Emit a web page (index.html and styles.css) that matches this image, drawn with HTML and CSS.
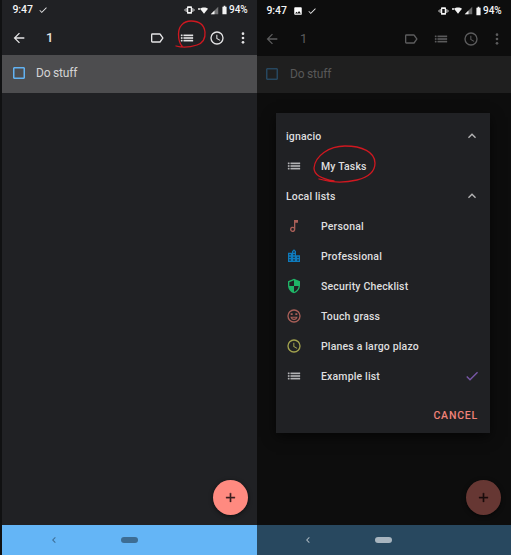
FILE: index.html
```html
<!DOCTYPE html>
<html lang="en">
<head>
<meta charset="utf-8">
<title>Tasks</title>
<link rel="stylesheet" href="styles.css">
</head>
<body>
<svg class="defs" aria-hidden="true">
  <symbol id="back" viewBox="0 0 24 24"><path d="M20 11H7.8l5.6-5.6L12 4l-8 8 8 8 1.4-1.4L7.8 13H20z"/></symbol>
  <symbol id="label" viewBox="0 0 24 24"><path d="M17.6 5.8C17.3 5.3 16.7 5 16 5H5a2 2 0 0 0-2 2v10c0 1.1.9 2 2 2h11c.7 0 1.3-.3 1.6-.8L22 12zM16 17H5V7h11l3.6 5z"/></symbol>
  <symbol id="list" viewBox="0 0 24 24"><path d="M3 9h2V7H3zm0 4h2v-2H3zm0 4h2v-2H3zM7 9h14V7H7zm0 4h14v-2H7zm0 4h14v-2H7z" stroke="currentColor" stroke-width=".5"/></symbol>
  <symbol id="clock" viewBox="0 0 24 24"><path d="M12 2a10 10 0 1 0 0 20 10 10 0 0 0 0-20zm0 18a8 8 0 1 1 0-16 8 8 0 0 1 0 16zm.5-13H11v6l5.2 3.2.8-1.3-4.5-2.7z"/></symbol>
  <symbol id="more" viewBox="0 0 24 24"><circle cx="12" cy="5.500" r="2"/><circle cx="12" cy="12" r="2"/><circle cx="12" cy="18.500" r="2"/></symbol>
  <symbol id="check" viewBox="0 0 24 24"><path d="M9 16.2 4.8 12l-1.4 1.4L9 19 21 7l-1.4-1.4z"/></symbol>
  <symbol id="image" viewBox="0 0 24 24"><path d="M21 19V5a2 2 0 0 0-2-2H5a2 2 0 0 0-2 2v14c0 1.1.9 2 2 2h14a2 2 0 0 0 2-2zM8.500 13.500l2.500 3L14.500 12l4.500 6H5z"/></symbol>
  <symbol id="vibrate" viewBox="0 0 24 24"><path fill-rule="evenodd" d="M8 3h8a2 2 0 0 1 2 2v14a2 2 0 0 1-2 2H8a2 2 0 0 1-2-2V5a2 2 0 0 1 2-2zm1 4v10h6V7zM3 7h2v10H3zm16 0h2v10h-2zM0 10h2v4H0zm22 0h2v4h-2z"/></symbol>
  <symbol id="wifi" viewBox="0 0 24 24"><path d="M12 21.500 24 7C18 1.500 6 1.500 0 7z"/></symbol>
  <symbol id="signal" viewBox="0 0 24 24"><path opacity=".4" d="M2 22h20V2z"/><path d="M2 22h10V12z"/></symbol>
  <symbol id="battery" viewBox="0 0 12 24"><path d="M4 2h4v2h3v18H1V4h3z"/></symbol>
  <symbol id="note" viewBox="0 0 24 24"><path fill-rule="evenodd" d="M12 3v10.600A4 4 0 1 0 14 17V7h4V3zM10 19a2 2 0 1 1 0-4 2 2 0 0 1 0 4z"/></symbol>
  <symbol id="city" viewBox="0 0 24 24"><path d="M15 11V5l-3-3-3 3v2H3v14h18V11zm-8 8H5v-2h2zm0-4H5v-2h2zm0-4H5V9h2zm6 8h-2v-2h2zm0-4h-2v-2h2zm0-4h-2V9h2zm0-4h-2V5h2zm6 12h-2v-2h2zm0-4h-2v-2h2z"/></symbol>
  <symbol id="shield" viewBox="0 0 24 24"><path d="M12 1 3 5v6c0 5.550 3.840 10.740 9 12 5.160-1.260 9-6.450 9-12V5zm0 11h7c-.5 4.100-3.300 7.800-7 8.900V12H5V6.300l7-3.100z"/></symbol>
  <symbol id="face" viewBox="0 0 24 24"><circle cx="12" cy="12" r="9" fill="none" stroke="currentColor" stroke-width="2"/><path d="M7 8h3v2.500H7zm7 0h3v2.500h-3zM6.500 13h11c-.6 3-2.800 5-5.500 5s-4.900-2-5.500-5zm2.500 1.700c.7 1 1.700 1.600 3 1.600s2.300-.6 3-1.600z"/></symbol>
  <symbol id="up" viewBox="0 0 24 24"><path d="m12 8-6 6 1.400 1.400 4.600-4.600 4.600 4.600L18 14z"/></symbol>
  <symbol id="plus" viewBox="0 0 24 24"><path d="M19 13h-6v6h-2v-6H5v-2h6V5h2v6h6z"/></symbol>
  <symbol id="prev" viewBox="0 0 24 24"><path d="M15.400 7.400 14 6l-6 6 6 6 1.400-1.400-4.600-4.600z"/></symbol>
</svg>
<main class="screens">
  <section class="phone">
    <header class="status">
      <span class="time">9:47</span>
      <svg class="tick"><use href="#check"/></svg>
      <div class="system">
        <svg class="vibrate"><use href="#vibrate"/></svg><i class="dot"></i>
        <svg class="wifi"><use href="#wifi"/></svg>
        <svg class="signal"><use href="#signal"/></svg>
        <svg class="battery"><use href="#battery"/></svg>
        <span class="percent">94%</span>
      </div>
    </header>
    <nav class="toolbar">
      <svg class="icon"><use href="#back"/></svg>
      <span class="count">1</span>
      <div class="actions">
        <svg class="icon"><use href="#label"/></svg>
        <svg class="icon"><use href="#list"/></svg>
        <svg class="icon"><use href="#clock"/></svg>
        <svg class="icon more"><use href="#more"/></svg>
      </div>
    </nav>
    <div class="task"><i class="box"></i><span>Do stuff</span></div>
    <button class="fab" aria-label="Add"><svg class="plus"><use href="#plus"/></svg></button>
    <svg class="mark mark-icon" viewBox="0 0 34 32"><path d="M1 27c7 2 15 1 21-1 6-2 8.500-7 8-13C29 5 23 2 16 2 8 2 3.500 8 3.500 15c0 5 .5 9 3.500 12"/></svg>
    <footer class="navbar"><svg class="prev"><use href="#prev"/></svg><i class="pill"></i></footer>
  </section>
  <section class="phone dimmed">
    <header class="status">
      <span class="time">9:47</span>
      <svg class="picture"><use href="#image"/></svg>
      <svg class="tick"><use href="#check"/></svg>
      <div class="system">
        <svg class="vibrate"><use href="#vibrate"/></svg><i class="dot"></i>
        <svg class="wifi"><use href="#wifi"/></svg>
        <svg class="signal"><use href="#signal"/></svg>
        <svg class="battery"><use href="#battery"/></svg>
        <span class="percent">94%</span>
      </div>
    </header>
    <nav class="toolbar">
      <svg class="icon"><use href="#back"/></svg>
      <span class="count">1</span>
      <div class="actions">
        <svg class="icon"><use href="#label"/></svg>
        <svg class="icon"><use href="#list"/></svg>
        <svg class="icon"><use href="#clock"/></svg>
        <svg class="icon more"><use href="#more"/></svg>
      </div>
    </nav>
    <div class="task"><i class="box"></i><span>Do stuff</span></div>
    <button class="fab" aria-label="Add"><svg class="plus"><use href="#plus"/></svg></button>
    <div class="dialog">
      <div class="row head"><span>ignacio</span><svg class="icon end"><use href="#up"/></svg></div>
      <div class="row"><svg class="icon grey"><use href="#list"/></svg><span>My Tasks</span></div>
      <div class="row head"><span>Local lists</span><svg class="icon end"><use href="#up"/></svg></div>
      <div class="row"><svg class="icon red"><use href="#note"/></svg><span>Personal</span></div>
      <div class="row"><svg class="icon blue"><use href="#city"/></svg><span>Professional</span></div>
      <div class="row"><svg class="icon green"><use href="#shield"/></svg><span>Security Checklist</span></div>
      <div class="row"><svg class="icon red"><use href="#face"/></svg><span>Touch grass</span></div>
      <div class="row"><svg class="icon olive"><use href="#clock"/></svg><span>Planes a largo plazo</span></div>
      <div class="row"><svg class="icon grey"><use href="#list"/></svg><span>Example list</span><svg class="icon end purple"><use href="#check"/></svg></div>
      <div class="buttons"><span class="cancel">CANCEL</span></div>
    </div>
    <svg class="mark mark-row" viewBox="0 0 66 40"><path d="M7 35c10 3 25 4 38 1 12-3 18-9 18-17C63 8 50 2 33 2 17 2 3 12 2 24c0 7 8 11 20 13"/></svg>
    <footer class="navbar"><svg class="prev"><use href="#prev"/></svg><i class="pill"></i></footer>
  </section>
</main>
</body>
</html>
```
FILE: styles.css
```css
* { box-sizing: border-box; }
body { margin: 0; background: #101112; font-family: Roboto, sans-serif; }
svg { display: block; flex: none; fill: currentColor; }
.defs { position: absolute; width: 0; height: 0; }
.screens { display: flex; height: 555px; padding-left: 2px; overflow: hidden; }
.phone { position: relative; display: flex; flex-direction: column; width: 255px; height: 555px; background: #202124; color: #e4e4e5; flex: none; }
.status { display: flex; align-items: center; height: 20px; padding: 0 9px 0 10.500px; }
.time { width: 20px; font-size: 10.5px; font-weight: 500; line-height: 20px; letter-spacing: -.1px; color: #f4f4f4; white-space: nowrap; }
.tick { width: 10px; height: 10px; margin-left: 5.500px; }
.picture { width: 10px; height: 10px; margin-left: 6px; color: #fff; }
.system { display: flex; align-items: center; margin-left: auto; color: #f4f4f4; }
.vibrate { width: 11px; height: 10px; }
.dot { width: 2px; height: 2px; margin: -3px 0 0 3px; background: #bbb; }
.wifi { width: 8px; height: 9px; }
.signal { width: 9px; height: 9px; margin-left: 2px; }
.battery { width: 5px; height: 10px; margin-left: 3px; }
.percent { width: 19px; margin-left: 2px; font-size: 10px; line-height: 20px; font-weight: 500; white-space: nowrap; }
.toolbar { display: flex; align-items: center; height: 35px; padding: 0 6px 0 9px; }
.icon { width: 16px; height: 16px; }
.count { margin-left: 19px; font-size: 13px; font-weight: 500; line-height: 16px; }
.actions { display: flex; align-items: center; gap: 14px; margin-left: auto; }
.more { margin-left: -4px; }
.task { display: flex; align-items: center; gap: 11px; height: 38px; padding: 0 0 2px 11px; background: #4d4d4f; color: #d4d4d5; font-size: 12px; letter-spacing: -.2px; }
.box { width: 12px; height: 12px; border: 1.500px solid #62b2f2; border-radius: 1px; box-shadow: inset 0 0 0 .5px #62b2f2; }
.fab { position: absolute; left: 211px; top: 480px; display: flex; align-items: center; justify-content: center; width: 35px; height: 35px; padding: 0; border: 0; border-radius: 50%; background: #ff8a80; color: #3a2020; box-shadow: 0 1px 4px rgba(0, 0, 0, .6); }
.plus { width: 15px; height: 15px; stroke: currentColor; stroke-width: .6; }
.navbar { display: flex; align-items: center; height: 30px; margin-top: auto; padding-left: 45px; background: #64b5f6; color: #3d6d94; }
.prev { width: 14px; height: 12px; }
.pill { width: 17px; height: 6px; margin-left: 60px; border-radius: 3px; background: #3d6d94; }
.mark { position: absolute; fill: none; stroke: #cf1820; stroke-width: 1.300; stroke-linecap: round; }
.mark-icon { left: 173px; top: 19px; width: 34px; height: 32px; }
.mark-row { left: 55px; top: 144px; width: 66px; height: 40px; }

.dimmed { width: 254px; background: #0d0d0d; }
.dimmed .status { height: 21px; padding-right: 9px; padding-left: 9.500px; }
.dimmed .tick { margin-left: 4px; }
.dimmed .toolbar { padding-left: 7px; color: #5c5c5d; }
.dimmed .count { margin-left: 20px; font-weight: 400; }
.dimmed .task { height: 37px; padding: 0 0 1px 9px; gap: 12px; background: #1f1f1f; color: #585858; }
.dimmed .box { border-color: #27475f; box-shadow: inset 0 0 0 .5px #27475f; }
.dimmed .fab { left: 209px; background: #663733; color: #1b0d0d; }
.dimmed .navbar { padding-left: 44px; background: #28485f; color: #a8b5bf; }
.dimmed .pill { background: #a8b5bf; }

.dialog { position: absolute; left: 19px; top: 113px; width: 214px; height: 320px; padding: 8px 10px 0 9px; background: #202124; color: #dededf; box-shadow: 0 4px 12px rgba(0, 0, 0, .6); }
.row { display: flex; align-items: center; height: 30px; padding-left: 1px; font-size: 10.5px; font-weight: 500; letter-spacing: .16px; }
.row .icon + span { margin-left: 19px; }
.end { margin-left: auto; }
.head .end, .grey { color: #b4b4b5; }
.red { color: #a95f58; }
.blue { color: #0e7bbd; }
.green { color: #1fb567; }
.olive { color: #a3a34e; }
.purple { color: #7857a8; }
.buttons { display: flex; justify-content: flex-end; padding: 17px 2px 0 0; }
.cancel { font-size: 10.5px; font-weight: 500; line-height: 16px; letter-spacing: .8px; color: #f28279; }
```
